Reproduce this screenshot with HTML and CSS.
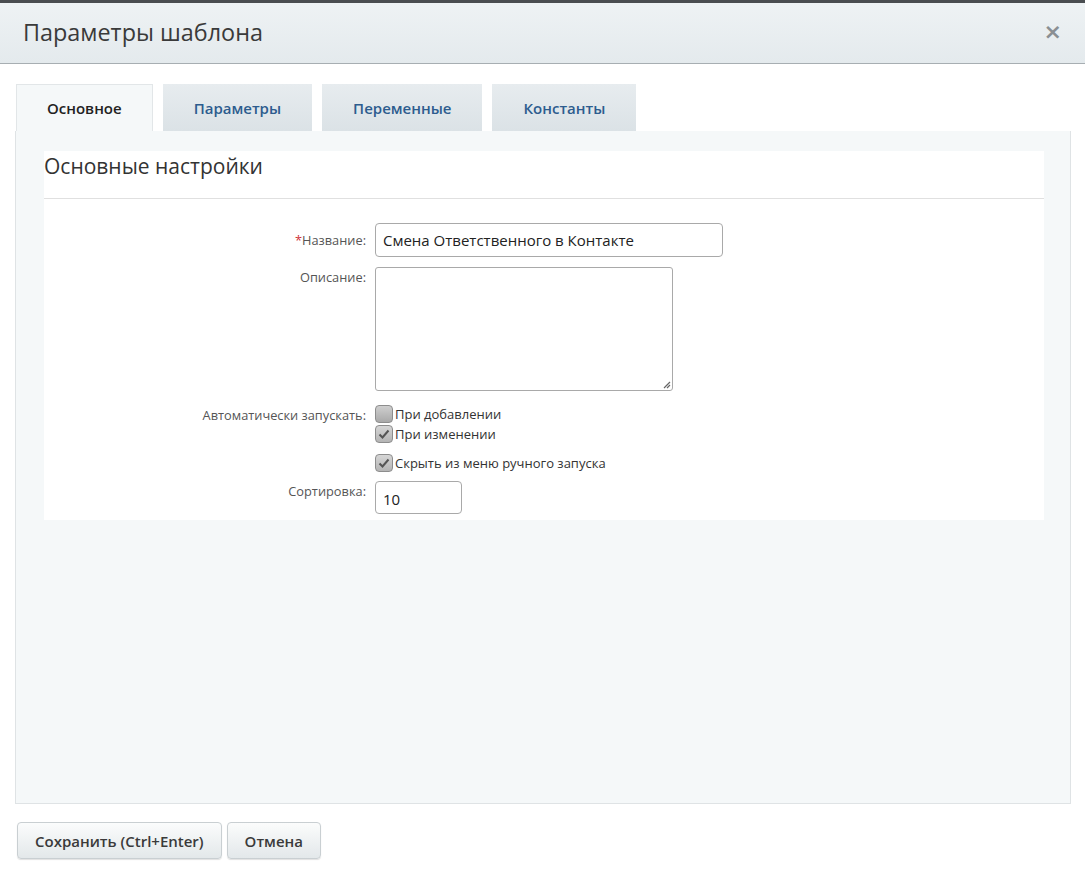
FILE: index.html
```html
<!DOCTYPE html>
<html lang="ru">
<head>
<meta charset="utf-8">
<title>Параметры шаблона</title>
<link rel="stylesheet" href="styles.css">
</head>
<body>
<div class="backdrop"></div>
<div class="dialog">
  <div class="dlg-head">
    <div class="dlg-title">Параметры шаблона</div>
    <div class="dlg-close">×</div>
  </div>
  <div class="dlg-body">
    <div class="tabs">
      <div class="tab active">Основное</div>
      <div class="tab">Параметры</div>
      <div class="tab">Переменные</div>
      <div class="tab">Константы</div>
    </div>
    <div class="panel">
      <div class="card">
        <div class="card-title">Основные настройки</div>
        <div class="form">
          <div class="row row-center">
            <div class="label"><span class="req">*</span>Название:</div>
            <div class="ctrl"><div class="input name">Смена Ответственного в Контакте</div></div>
          </div>
          <div class="row">
            <div class="label pad">Описание:</div>
            <div class="ctrl"><div class="textarea"><svg class="grip" width="10" height="10" viewBox="0 0 10 10"><path d="M9 3 L3 9 M9 6 L6 9" stroke="#666" stroke-width="1.2"/></svg></div></div>
          </div>
          <div class="row row-auto">
            <div class="label lab-cb">Автоматически запускать:</div>
            <div class="ctrl checks">
              <div class="cb-line"><span class="cb"></span>При добавлении</div>
              <div class="cb-line"><span class="cb checked"><svg width="14" height="14" viewBox="0 0 14 14"><path d="M2.5 7.5 L5.5 10.5 L11.5 3.5" fill="none" stroke="#555" stroke-width="2"/></svg></span>При изменении</div>
            </div>
          </div>
          <div class="row row-hide">
            <div class="label"></div>
            <div class="ctrl"><div class="cb-line"><span class="cb checked"><svg width="14" height="14" viewBox="0 0 14 14"><path d="M2.5 7.5 L5.5 10.5 L11.5 3.5" fill="none" stroke="#555" stroke-width="2"/></svg></span>Скрыть из меню ручного запуска</div></div>
          </div>
          <div class="row">
            <div class="label pad">Сортировка:</div>
            <div class="ctrl"><div class="input sort">10</div></div>
          </div>
        </div>
      </div>
    </div>
    <div class="buttons">
      <div class="btn">Сохранить (Ctrl+Enter)</div>
      <div class="btn">Отмена</div>
    </div>
  </div>
</div>
</body>
</html>
```
FILE: styles.css
```css
* { box-sizing: border-box; }
html, body { margin: 0; padding: 0; }
body {
  width: 1085px;
  height: 876px;
  overflow: hidden;
  background: #ffffff;
  font-family: "Open Sans", "Noto Sans", sans-serif;
  color: #333;
}
.backdrop {
  height: 3px;
  background: #4a4d50;
}
.dialog {
  background: #fff;
}
.dlg-head {
  height: 61px;
  background: linear-gradient(#eef2f4, #e4eaed);
  border-bottom: 1px solid #a7aeb2;
  display: flex;
  align-items: center;
  justify-content: space-between;
  padding: 0 23px 0 23px;
}
.dlg-title {
  font-size: 23.4px;
  color: #3a3a3a;
  margin-top: -2px;
}
.dlg-close {
  font-family: "DejaVu Sans", sans-serif;
  font-size: 22px;
  font-weight: bold;
  color: #8a8f93;
  margin-top: -4px;
}
.dlg-body {
  padding: 20px 14px 0 15px;
}
.tabs {
  display: flex;
  gap: 10px;
  padding-left: 1px;
  height: 47px;
}
.tab {
  height: 47px;
  padding: 0 31px;
  display: flex;
  align-items: center;
  justify-content: center;
  font-size: 15px;
  font-weight: 600;
  color: #2d5c8e;
  background: linear-gradient(#e7ecef, #dbe2e6);
}
.tab.active {
  padding: 0 30px;
  background: #f5f8f9;
  color: #222;
  border: 1px solid #e2e6e8;
  border-bottom: none;
}
.panel {
  height: 673px;
  background: #f5f8f9;
  border: 1px solid #dfe3e5;
  border-top: none;
  padding: 20px 26px 0 28px;
}
.card {
  background: #fff;
  height: 369px;
}
.card-title {
  height: 48px;
  border-bottom: 1px solid #e0e0e0;
  font-size: 21px;
  color: #333;
  line-height: 30px;
}
.form {
  padding-top: 24px;
}
.row {
  display: flex;
  gap: 9px;
  margin-bottom: 10px;
}
.row-center { align-items: center; }
.label {
  width: 322px;
  flex: none;
  text-align: right;
  font-size: 12.8px;
  color: #555;
}
.label.pad { padding-top: 1px; }
.req { color: #d0343a; }
.ctrl { flex: none; }
.input {
  border: 1px solid #a9a9a9;
  border-radius: 4px;
  height: 34px;
  display: flex;
  align-items: center;
  padding-left: 7px;
  font-size: 15px;
  color: #222;
  background: #fff;
}
.input.name { width: 348px; }
.input.sort { width: 87px; height: 33px; padding-top: 3px; }
.textarea {
  width: 298px;
  height: 124px;
  border: 1px solid #a9a9a9;
  border-radius: 3px;
  position: relative;
  background: #fff;
}
.grip {
  position: absolute;
  right: 1px;
  bottom: 1px;
}
.row-auto { margin-bottom: 11px; padding-top: 4px; }
.lab-cb { padding-top: 1px; }
.checks { display: flex; flex-direction: column; gap: 2px; }
.row-hide { margin-bottom: 9px; }
.cb-line {
  display: flex;
  align-items: center;
  font-size: 13px;
  color: #333;
  height: 18px;
}
.cb {
  width: 18px;
  height: 18px;
  border-radius: 4px;
  border: 1px solid #8d8d8d;
  background: linear-gradient(#cfcfcf, #a9a9a9);
  margin-right: 2px;
  display: flex;
  align-items: center;
  justify-content: center;
  flex: none;
}
.cb.checked {
  background: linear-gradient(#d6d6d6, #b4b4b4);
}
.buttons {
  display: flex;
  gap: 5px;
  padding-top: 18px;
  padding-left: 2px;
}
.btn {
  height: 37px;
  padding: 0 17px;
  display: flex;
  align-items: center;
  border: 1px solid #c9cfd2;
  border-radius: 4px;
  background: linear-gradient(#fbfcfc, #e3e8ea);
  font-size: 15px;
  font-weight: 600;
  color: #3a3a3a;
  box-shadow: 0 1px 1px rgba(0,0,0,0.12);
}
```
